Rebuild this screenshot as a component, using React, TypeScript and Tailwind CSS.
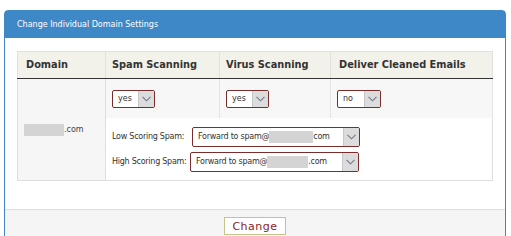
import React from "react";

const font = { fontFamily: '"DejaVu Sans", Verdana, sans-serif' };

function Chevron() {
  return (
    <svg width="9" height="6" viewBox="0 0 9 6" fill="none">
      <path d="M0.5 0.8 L4.5 4.8 L8.5 0.8" stroke="#6b7b8c" strokeWidth="1.1" />
    </svg>
  );
}

function FakeSelect({ children, textW, h = 18 }: { children: React.ReactNode; textW: number; h?: number }) {
  return (
    <div
      className="inline-flex shrink-0 border border-[#7b2d2d] rounded-[2px] bg-white overflow-hidden align-middle"
      style={{ height: h }}
    >
      <div className="flex items-center whitespace-nowrap px-[5px] text-[8px] text-[#333]" style={{ width: textW }}>
        {children}
      </div>
      <div className="w-[16px] bg-[#dcdcdc] border-l border-[#c8c8c8] flex items-center justify-center">
        <Chevron />
      </div>
    </div>
  );
}

function Blur({ w }: { w: number }) {
  return <span className="inline-block h-[12px] bg-[#d4d4d4]" style={{ width: w }} />;
}

export default function App() {
  return (
    <div className="bg-white w-[511px] h-[236px] overflow-hidden pt-[10px] pl-[4px]" style={font}>
      <div className="w-[502px] border border-[#3f88c8] rounded-t-[4px]">
        <div className="h-[27px] bg-[#3f88c8] flex items-center px-[12px] text-[8px] text-white">
          Change Individual Domain Settings
        </div>
        <div className="px-[12px] pt-[13px] pb-[28px] border-b border-[#dedede]">
          <table className="border-collapse w-[475px] table-fixed">
            <colgroup>
              <col className="w-[88px]" />
              <col className="w-[114px]" />
              <col className="w-[111px]" />
              <col className="w-[162px]" />
            </colgroup>
            <thead>
              <tr className="h-[27px] bg-[#f2f1ea] text-[9.8px] font-bold text-[#333] text-left">
                <th className="pl-[8px] border-t border-l border-[#e2e2dc] border-b border-b-[#333]">Domain</th>
                <th className="pl-[6px] border-t border-l border-[#e2e2dc] border-b border-b-[#333]">Spam Scanning</th>
                <th className="pl-[6px] border-t border-l border-[#e2e2dc] border-b border-b-[#333]">Virus Scanning</th>
                <th className="pl-[8px] border-t border-l border-r border-[#e2e2dc] border-b border-b-[#333]">Deliver Cleaned Emails</th>
              </tr>
            </thead>
            <tbody>
              <tr className="h-[39px]">
                <td rowSpan={2} className="bg-[#f6f6f6] border-l border-b border-[#dedede] pl-[6px] text-[8px] text-[#444]">
                  <div className="flex items-center">
                    <Blur w={40} />
                    <span>.com</span>
                  </div>
                </td>
                <td className="bg-[#f7f7f7] border-l border-[#dedede] pl-[6px]">
                  <FakeSelect textW={25}>yes</FakeSelect>
                </td>
                <td className="bg-[#f7f7f7] border-l border-[#e4e4e4] pl-[6px]">
                  <FakeSelect textW={25}>yes</FakeSelect>
                </td>
                <td className="bg-[#f7f7f7] border-l border-r border-[#e4e4e4] pl-[6px]">
                  <FakeSelect textW={26}>no</FakeSelect>
                </td>
              </tr>
              <tr className="h-[63px]">
                <td colSpan={3} className="bg-white border-l border-r border-b border-[#dedede] pl-[6px] align-top pt-[9px]">
                  <div className="flex flex-col gap-[5px] text-[8px] tracking-[-0.25px] text-[#333] whitespace-nowrap">
                    <div className="flex items-center">
                      <span className="w-[80px] shrink-0">Low Scoring Spam:</span>
                      <FakeSelect textW={150} h={20}>
                        <span>Forward to spam@</span>
                        <Blur w={44} />
                        <span>com</span>
                      </FakeSelect>
                    </div>
                    <div className="flex items-center">
                      <span className="w-[78px] shrink-0">High Scoring Spam:</span>
                      <FakeSelect textW={151} h={20}>
                        <span>Forward to spam@</span>
                        <Blur w={41} />
                        <span>.com</span>
                      </FakeSelect>
                    </div>
                  </div>
                </td>
              </tr>
            </tbody>
          </table>
        </div>
        <div className="bg-[#f5f5f5] pt-[7px] pb-[20px] flex justify-center">
          <button className="h-[18px] px-[7px] bg-white border border-[#c2c48a] text-[11px] tracking-[0.5px] text-[#8a1c1c] leading-none">
            Change
          </button>
        </div>
      </div>
    </div>
  );
}
